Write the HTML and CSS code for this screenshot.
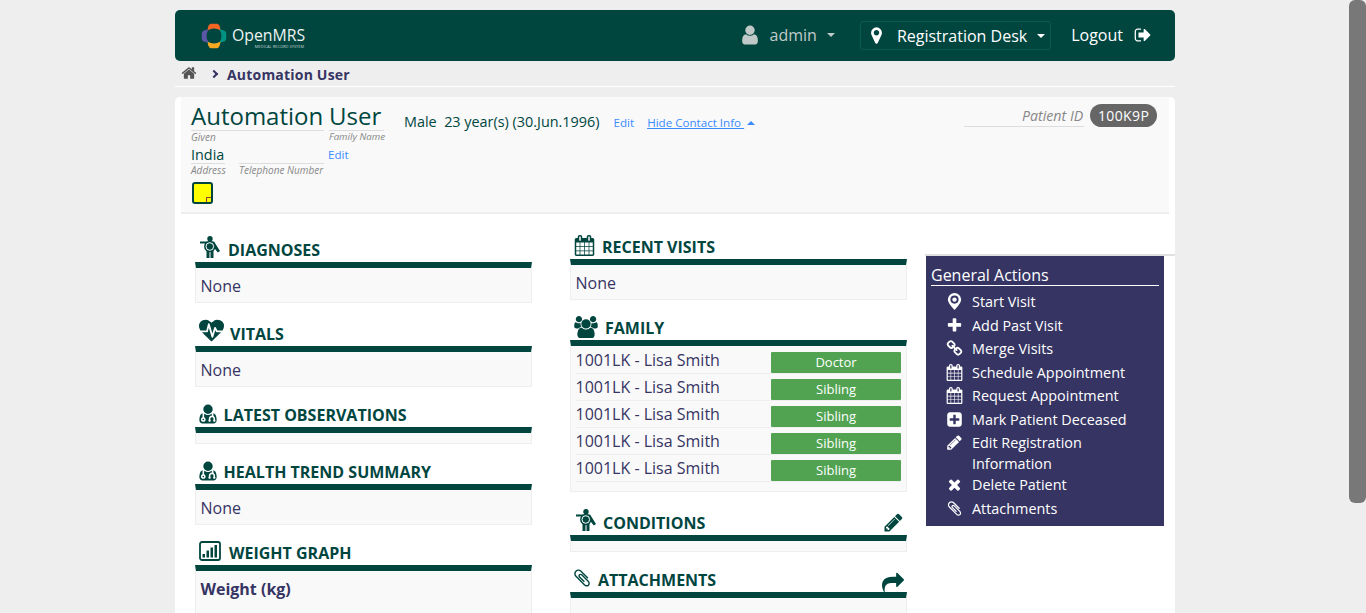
FILE: index.html
```html
<!DOCTYPE html>
<html lang="en">
<head>
  <meta charset="UTF-8">
  <title>OpenMRS - Automation User</title>
  <link rel="stylesheet" href="styles.css">
</head>
<body>
  <svg class="sprite" xmlns="http://www.w3.org/2000/svg">
    <symbol id="i-pencil" viewBox="0 0 1792 1792"><path d="M491 1536l91-91-235-235-91 91v107h128v128h107zm523-928q0-22-22-22-10 0-17 7l-542 542q-7 7-7 17 0 22 22 22 10 0 17-7l542-542q7-7 7-17zm-54-192l416 416-832 832h-416v-416zm683 96q0 53-37 90l-166 166-416-416 166-165q36-38 90-38 53 0 91 38l235 234q37 39 37 91z"/></symbol>
    <symbol id="i-plus" viewBox="0 0 1792 1792"><path d="M1600 736v192q0 40-28 68t-68 28h-416v416q0 40-28 68t-68 28h-192q-40 0-68-28t-28-68v-416h-416q-40 0-68-28t-28-68v-192q0-40 28-68t68-28h416v-416q0-40 28-68t68-28h192q40 0 68 28t28 68v416h416q40 0 68 28t28 68z"/></symbol>
    <symbol id="i-times" viewBox="0 0 1792 1792"><path d="M1490 1322q0 40-28 68l-136 136q-28 28-68 28t-68-28l-294-294-294 294q-28 28-68 28t-68-28l-136-136q-28-28-28-68t28-68l294-294-294-294q-28-28-28-68t28-68l136-136q28-28 68-28t68 28l294 294 294-294q28-28 68-28t68 28l136 136q28 28 28 68t-28 68l-294 294 294 294q28 28 28 68z"/></symbol>
    <symbol id="i-marker" viewBox="0 0 1792 1792"><path d="M1152 640q0-106-75-181t-181-75-181 75-75 181 75 181 181 75 181-75 75-181zm256 0q0 109-33 179l-364 774q-16 33-47.5 52t-67.5 19-67.5-19-46.5-52l-365-774q-33-70-33-179 0-212 150-362t362-150 362 150 150 362z"/></symbol>
    <symbol id="i-user" viewBox="0 0 1792 1792"><path d="M1536 1399q0 109-62.5 187t-150.5 78h-854q-88 0-150.5-78t-62.5-187q0-85 8.5-160.5t31.5-152 58.5-131 94-89 134.5-34.5q131 128 313 128t313-128q76 0 134.5 34.5t94 89 58.5 131 31.5 152 8.5 160.5zm-256-887q0 159-112.5 271.5t-271.5 112.5-271.5-112.5-112.5-271.5 112.5-271.5 271.5-112.5 271.5 112.5 112.5 271.5z"/></symbol>
    <symbol id="i-share" viewBox="0 0 1792 1792"><path d="M1792 640q0 26-19 45l-512 512q-19 19-45 19t-45-19-19-45v-256h-224q-98 0-175.500 6t-154 21.500-133 42.500-105.500 69.500-80 101-48.500 138.500-17.500 181q0 55 5 123 0 6 2.500 23.500t2.500 26.500q0 15-8.500 25t-23.500 10q-16 0-28-17-7-9-13-22t-13.500-30-10.500-24q-127-285-127-451 0-199 53-333 162-403 875-403h224v-256q0-26 19-45t45-19 45 19l512 512q19 19 19 45z"/></symbol>
    <symbol id="i-home" viewBox="0 0 1792 1792"><path d="M1472 992v480q0 26-19 45t-45 19h-384v-384h-256v384h-384q-26 0-45-19t-19-45v-480q0-1 .5-3t.5-3l575-474 575 474q1 2 1 6zm223-69l-62 74q-8 9-21 11h-3q-13 0-21-7l-692-577-692 577q-12 8-24 7-13-2-21-11l-62-74q-8-10-7-23.500t11-21.500l719-599q32-26 76-26t76 26l244 204v-195q0-14 9-23t23-9h192q14 0 23 9t9 23v408l219 182q10 8 11 21.500t-7 23.500z"/></symbol>
    <symbol id="i-calendar" viewBox="0 0 1792 1792"><path d="M192 1664h288v-288h-288v288zm352 0h320v-288h-320v288zm-352-352h288v-320h-288v320zm352 0h320v-320h-320v320zm-352-384h288v-288h-288v288zm736 736h320v-288h-320v288zm-384-736h320v-288h-320v288zm768 736h288v-288h-288v288zm-384-352h320v-320h-320v320zm-352-864v-288q0-13-9.500-22.500t-22.500-9.500h-64q-13 0-22.500 9.500t-9.500 22.500v288q0 13 9.500 22.500t22.500 9.500h64q13 0 22.500-9.500t9.500-22.500zm736 864h288v-320h-288v320zm-384-384h320v-288h-320v288zm384 0h288v-288h-288v288zm32-480v-288q0-13-9.500-22.500t-22.500-9.500h-64q-13 0-22.500 9.500t-9.500 22.500v288q0 13 9.500 22.500t22.500 9.500h64q13 0 22.500-9.500t9.500-22.500zm384-64v1280q0 52-38 90t-90 38h-1408q-52 0-90-38t-38-90v-1280q0-52 38-90t90-38h128v-96q0-66 47-113t113-47h64q66 0 113 47t47 113v96h384v-96q0-66 47-113t113-47h64q66 0 113 47t47 113v96h128q52 0 90 38t38 90z"/></symbol>
    <symbol id="i-users" viewBox="0 0 1920 1792"><path d="M593 896q-162 5-265 128h-134q-82 0-138-40.500t-56-118.500q0-353 124-353 6 0 43.500 21t97.500 42.500 119 21.500q67 0 133-23-5 37-5 66 0 139 81 256zm1071 637q0 120-73 189.500t-194 69.500h-874q-121 0-194-69.500t-73-189.500q0-53 3.500-103.500t14-109 26.500-108.500 43-97.500 62-81 85.500-53.500 111.500-20q10 0 43 21.500t73 48 107 48 135 21.500 135-21.500 107-48 73-48 43-21.500q61 0 111.500 20t85.500 53.500 62 81 43 97.500 26.500 108.500 14 109 3.500 103.500zm-1024-1277q0 106-75 181t-181 75-181-75-75-181 75-181 181-75 181 75 75 181zm704 384q0 159-112.500 271.500t-271.500 112.500-271.500-112.500-112.500-271.500 112.500-271.500 271.500-112.500 271.500 112.500 112.500 271.500zm576 225q0 78-56 118.500t-138 40.500h-134q-103-123-265-128 81-117 81-256 0-29-5-66 66 23 133 23 59 0 119-21.500t97.500-42.500 43.500-21q124 0 124 353zm-128-609q0 106-75 181t-181 75-181-75-75-181 75-181 181-75 181 75 75 181z"/></symbol>
    <symbol id="i-plus-square" viewBox="0 0 1792 1792"><path d="M1408 960v-128q0-26-19-45t-45-19h-320v-320q0-26-19-45t-45-19h-128q-26 0-45 19t-19 45v320h-320q-26 0-45 19t-19 45v128q0 26 19 45t45 19h320v320q0 26 19 45t45 19h128q26 0 45-19t19-45v-320h320q26 0 45-19t19-45zm256-544v960q0 119-84.500 203.500t-203.500 84.500h-960q-119 0-203.500-84.500t-84.500-203.500v-960q0-119 84.500-203.500t203.500-84.500h960q119 0 203.500 84.500t84.500 203.500z"/></symbol>
    <symbol id="i-clip" viewBox="0 0 1792 1792"><path d="M1596 1385q0 117-79 196t-196 79q-135 0-235-100l-777-776q-113-115-113-271 0-159 110-270t269-111q158 0 273 113l605 606q10 10 10 22 0 16-30.500 46.500t-46.500 30.500q-13 0-23-10l-606-607q-79-77-181-77-106 0-179 75t-73 181q0 105 76 181l776 777q63 63 145 63 64 0 106-42t42-106q0-82-63-145l-581-581q-26-24-60-24-29 0-48 19t-19 48q0 32 25 59l410 410q10 10 10 22 0 16-31 47t-47 31q-12 0-22-10l-410-410q-63-61-63-149 0-82 57-139t139-57q88 0 149 63l581 581q100 98 100 235z"/></symbol>
    <symbol id="i-signout" viewBox="0 0 1792 1792"><path d="M704 1440q0 4 1 20t.5 26.500-3 23.500-10 19.500-20.500 6.500h-320q-119 0-203.500-84.500t-84.500-203.500v-704q0-119 84.500-203.500t203.500-84.500h320q13 0 22.500 9.500t9.500 22.500q0 4 1 20t.5 26.500-3 23.500-10 19.500-20.500 6.500h-320q-66 0-113 47t-47 113v704q0 66 47 113t113 47h312l11.500 1 11.500 3 8 5.500 7 9 2 13.500zm928-544q0 26-19 45l-544 544q-19 19-45 19t-45-19-19-45v-288h-448q-26 0-45-19t-19-45v-384q0-26 19-45t45-19h448v-288q0-26 19-45t45-19 45 19l544 544q19 19 19 45z"/></symbol>
    <symbol id="i-link" viewBox="0 0 1792 1792"><path d="M1520 1216q0-40-28-68l-208-208q-28-28-68-28-42 0-72 32 3 3 19 18.500t21.500 21.500 15 19 13 25.500 3.500 27.500q0 40-28 68t-68 28q-15 0-27.500-3.500t-25.500-13-19-15-21.500-21.500-18.500-19q-33 31-33 73 0 40 28 68l206 207q27 27 68 27 40 0 68-26l147-146q28-28 28-67zm-703-705q0-40-28-68l-206-207q-28-28-68-28-39 0-68 27l-147 146q-28 28-28 67 0 40 28 68l208 208q27 27 68 27 42 0 72-31-3-3-19-18.500t-21.500-21.500-15-19-13-25.500-3.500-27.500q0-40 28-68t68-28q15 0 27.500 3.500t25.500 13 19 15 21.500 21.500 18.500 19q33-31 33-73zm895 705q0 120-85 203l-147 146q-83 83-203 83-121 0-204-85l-206-207q-83-83-83-203 0-123 88-209l-88-88q-86 88-208 88-120 0-204-84l-208-208q-84-84-84-204t85-203l147-146q83-83 203-83 121 0 204 85l206 207q83 83 83 203 0 123-88 209l88 88q86-88 208-88 120 0 204 84l208 208q84 84 84 204z"/></symbol>
    <symbol id="i-heartbeat" viewBox="0 0 1792 1792"><path d="M1280 1024h305q-5 6-10 10.500t-9 7.500l-3 4-623 600q-18 18-44 18t-44-18l-624-602q-5-2-21-20h369q22 0 39.500-13.500t22.500-34.500l70-281 190 667q6 20 23 33t39 13q21 0 38-13t23-33l146-485 56 112q18 35 57 35zm512-428q0 145-103 300h-369l-111-221q-8-17-25.500-27t-36.500-8q-45 5-56 46l-129 430-196-686q-6-20-23.500-33t-39.500-13-39 13.500-22 34.500l-116 464h-423q-103-155-103-300 0-220 127-344t351-124q62 0 126.500 21.500t120 58 95.500 68.500 76 68q36-36 76-68t95.500-68.500 120-58 126.500-21.500q224 0 351 124t127 344z"/></symbol>
    <symbol id="i-doctor" viewBox="0 0 1792 1792"><path d="M576 1344q0 26-19 45t-45 19-45-19-19-45 19-45 45-19 45 19 19 45zm1024 61q0 121-73 190t-194 69h-874q-121 0-194-69t-73-190q0-68 5.500-131t24-138 47.500-132.500 81-103 120-60.500q-22 52-22 120v203q-58 20-93 70t-35 111q0 80 56 136t136 56 136-56 56-136q0-61-35.500-111t-92.500-70v-203q0-62 25-93 132 104 295 104t295-104q25 31 25 93v64q-106 0-181 75t-75 181v89q-32 29-32 71 0 40 28 68t68 28 68-28 28-68q0-42-32-71v-89q0-52 38-90t90-38 90 38 38 90v89q-32 29-32 71 0 40 28 68t68 28 68-28 28-68q0-42-32-71v-89q0-68-34.500-127.500t-93.500-93.500q0-10 .5-42.500t0-48-2.500-41.500-7-47-13-40q68 15 120 60.500t81 103 47.500 132.500 24 138 5.500 131zm-320-893q0 159-112.500 271.500t-271.500 112.500-271.500-112.500-112.500-271.500 112.500-271.500 271.500-112.500 271.500 112.500 112.500 271.500z"/></symbol>
    <symbol id="i-graph" viewBox="0 0 22 20"><rect x="1" y="1" width="20" height="18" rx="2" fill="none" stroke="currentColor" stroke-width="1.8"/><rect x="3.500" y="13" width="2.500" height="3.500"/><rect x="7.500" y="9.500" width="2.500" height="7"/><rect x="11.500" y="6.500" width="2.500" height="10"/><rect x="15.500" y="4" width="2.500" height="12.500"/></symbol>
    <symbol id="i-body" viewBox="0 0 20 22"><circle cx="10" cy="2.800" r="2.700"/><path d="M0 5.500h14l6 9.500-2.200 1.500-4.300-5.500v11h-3V15h-1v7H6.500v-12L5 7.500H0z"/><circle cx="9.800" cy="10.500" r="5.700"/><circle cx="9.800" cy="10.500" r="3.800" fill="none" stroke="#fff" stroke-width="1"/></symbol>
    <symbol id="i-visit" viewBox="0 0 14 18"><path d="M7 0a7 7 0 0 1 7 7c0 3.500-4 8-7 11-3-3-7-7.500-7-11a7 7 0 0 1 7-7z"/><circle cx="7" cy="7" r="4.300" fill="#363463"/><circle cx="7" cy="7" r="2.300"/></symbol>
  </svg>

  <div class="page">
    <header class="topbar">
      <div class="logo">
        <svg class="logo-mark" viewBox="0 0 26 26">
          <path fill="#f26522" d="M6.500 7.500Q7 1 10 .8h6q3 .2 3.500 6.700Q13 3.500 6.500 7.500z"/>
          <path fill="#009384" d="M18.500 6.500Q25 7 25.200 10v6q-.2 3-6.700 3.500 4-6.500 0-13z"/>
          <path fill="#f7a823" d="M6.500 18.500Q7 25 10 25.200h6q3-.2 3.500-6.700-6.500 4-13 0z"/>
          <path fill="#5b57a6" d="M7.500 6.500Q1 7 .8 10v6q.2 3 6.700 3.500-4-6.500 0-13z"/>
        </svg>
        <div class="logo-text">
          <span class="logo-name">OpenMRS</span>
          <span class="logo-sub">MEDICAL RECORD SYSTEM</span>
        </div>
      </div>
      <nav class="topnav">
        <div class="nav-user">
          <svg class="nav-user-icon"><use href="#i-user"/></svg>
          <span>admin</span>
          <span class="caret"></span>
        </div>
        <div class="nav-location">
          <svg class="nav-pin"><use href="#i-marker"/></svg>
          <span>Registration Desk</span>
          <span class="caret"></span>
        </div>
        <div class="nav-logout">
          <span>Logout</span>
          <svg class="nav-logout-icon"><use href="#i-signout"/></svg>
        </div>
      </nav>
    </header>

    <div class="crumbs">
      <svg class="crumb-home"><use href="#i-home"/></svg>
      <span class="crumb-sep"></span>
      <span class="crumb-name">Automation User</span>
    </div>

    <main class="card">
      <section class="patient">
        <div class="patient-left">
          <div class="name-row">
            <div class="field field-given">
              <span class="field-value name">Automation</span>
              <span class="field-label">Given</span>
            </div>
            <div class="field field-family">
              <span class="field-value name">User</span>
              <span class="field-label">Family Name</span>
            </div>
          </div>
          <div class="address-row">
            <div class="field field-address">
              <span class="field-value">India</span>
              <span class="field-label">Address</span>
            </div>
            <div class="field field-phone">
              <span class="field-value">&nbsp;</span>
              <span class="field-label">Telephone Number</span>
            </div>
            <a class="link edit-contact" href="#">Edit</a>
          </div>
          <div class="sticky"><span class="sticky-fold"></span></div>
        </div>
        <div class="patient-info">
          <span class="demographics">Male&nbsp; 23 year(s) (30.Jun.1996)</span>
          <a class="link" href="#">Edit</a>
          <a class="link link-contact" href="#"><u>Hide Contact Info </u><span class="caret-up"></span></a>
        </div>
        <div class="patient-id">
          <span class="patient-id-label">Patient ID</span>
          <span class="badge-id">100K9P</span>
        </div>
      </section>

      <div class="columns">
        <div class="col">
          <section class="box">
            <h3 class="box-head tall"><svg class="ic ic-body"><use href="#i-body"/></svg>DIAGNOSES</h3>
            <div class="box-body">None</div>
          </section>
          <section class="box">
            <h3 class="box-head tall"><svg class="ic ic-heart"><use href="#i-heartbeat"/></svg>VITALS</h3>
            <div class="box-body">None</div>
          </section>
          <section class="box">
            <h3 class="box-head"><svg class="ic ic-doctor"><use href="#i-doctor"/></svg>LATEST OBSERVATIONS</h3>
            <div class="box-body empty"></div>
          </section>
          <section class="box">
            <h3 class="box-head"><svg class="ic ic-doctor"><use href="#i-doctor"/></svg>HEALTH TREND SUMMARY</h3>
            <div class="box-body">None</div>
          </section>
          <section class="box">
            <h3 class="box-head"><svg class="ic ic-graph"><use href="#i-graph"/></svg>WEIGHT GRAPH</h3>
            <div class="box-body graph-body"><strong>Weight (kg)</strong></div>
          </section>
        </div>

        <div class="col col-mid">
          <section class="box">
            <h3 class="box-head"><svg class="ic ic-cal"><use href="#i-calendar"/></svg>RECENT VISITS</h3>
            <div class="box-body">None</div>
          </section>
          <section class="box">
            <h3 class="box-head"><svg class="ic ic-users"><use href="#i-users"/></svg>FAMILY</h3>
            <div class="box-body family">
              <div class="family-row"><span>1001LK - Lisa Smith</span><span class="relation">Doctor</span></div>
              <div class="family-row"><span>1001LK - Lisa Smith</span><span class="relation">Sibling</span></div>
              <div class="family-row"><span>1001LK - Lisa Smith</span><span class="relation">Sibling</span></div>
              <div class="family-row"><span>1001LK - Lisa Smith</span><span class="relation">Sibling</span></div>
              <div class="family-row"><span>1001LK - Lisa Smith</span><span class="relation">Sibling</span></div>
            </div>
          </section>
          <section class="box">
            <h3 class="box-head tall"><svg class="ic ic-body"><use href="#i-body"/></svg>CONDITIONS<svg class="head-action ic-edit"><use href="#i-pencil"/></svg></h3>
            <div class="box-body empty"></div>
          </section>
          <section class="box">
            <h3 class="box-head"><svg class="ic ic-clip"><use href="#i-clip"/></svg>ATTACHMENTS<svg class="head-action ic-share"><use href="#i-share"/></svg></h3>
            <div class="box-body graph-body"></div>
          </section>
        </div>

        <aside class="side">
          <div class="actions">
            <h4 class="actions-title">General Actions</h4>
            <ul class="actions-list">
              <li><svg class="act-ic"><use href="#i-visit"/></svg><span>Start Visit</span></li>
              <li><svg class="act-ic"><use href="#i-plus"/></svg><span>Add Past Visit</span></li>
              <li><svg class="act-ic"><use href="#i-link"/></svg><span>Merge Visits</span></li>
              <li><svg class="act-ic"><use href="#i-calendar"/></svg><span>Schedule Appointment</span></li>
              <li><svg class="act-ic"><use href="#i-calendar"/></svg><span>Request Appointment</span></li>
              <li><svg class="act-ic"><use href="#i-plus-square"/></svg><span>Mark Patient Deceased</span></li>
              <li><svg class="act-ic"><use href="#i-pencil"/></svg><span>Edit Registration<br>Information</span></li>
              <li><svg class="act-ic"><use href="#i-times"/></svg><span>Delete Patient</span></li>
              <li><svg class="act-ic"><use href="#i-clip"/></svg><span>Attachments</span></li>
            </ul>
          </div>
        </aside>
      </div>
    </main>
  </div>
  <div class="scroll-thumb"></div>
</body>
</html>
```

FILE: styles.css
```css
* { box-sizing: border-box; }
html, body { height: 100%; margin: 0; }
body {
  display: flex;
  overflow: hidden;
  background: #eeeeee;
  color: #363463;
  font-family: "Open Sans", sans-serif;
  font-size: 14px;
}
a { text-decoration: none; }
svg { fill: currentColor; }
.sprite { display: none; }

.page {
  flex: 1;
  min-width: 0;
  height: 613px;
  padding: 10px 0 0 175px;
  overflow: hidden;
}
.scroll-thumb {
  flex: none;
  width: 17px;
  height: 503px;
  background: #787878;
  border-radius: 6px;
}

/* top bar */
.topbar {
  display: flex;
  align-items: center;
  justify-content: space-between;
  width: 1000px;
  height: 51px;
  padding: 0 23px 0 26px;
  background: #00463f;
  border-radius: 5px;
  color: #fff;
}
.logo { display: flex; align-items: center; gap: 5px; }
.logo-mark { width: 26px; height: 26px; }
.logo-text { display: flex; flex-direction: column; align-items: flex-end; margin-top: 5px; line-height: 1; }
.logo-name { height: 17px; font-size: 15.8px; line-height: 17px; overflow: visible; color: #eef3f2; }
.logo-sub { height: 5px; margin-right: 1px; font-size: 4px; line-height: 5px; color: #c5d3d1; }

.topnav { display: flex; align-items: center; font-size: 16px; }
.caret {
  display: inline-block;
  width: 0;
  height: 0;
  margin-left: 10px;
  border: 4px solid transparent;
  border-top-color: currentColor;
  border-bottom-width: 0;
}
.nav-user { display: flex; align-items: center; color: #c0c9c8; margin-bottom: 2px; }
.nav-user-icon { width: 22px; height: 22px; margin-right: 9px; }
.nav-location {
  display: flex;
  align-items: center;
  height: 29px;
  margin-left: 25px;
  padding: 0 5px 0 6px;
  border: 1px solid #0a5a52;
  border-radius: 3px;
}
.nav-pin { width: 19px; height: 19px; margin-right: 11px; }
.nav-logout { display: flex; align-items: center; margin-left: 20px; margin-bottom: 2px; }
.nav-logout-icon { width: 18px; height: 18px; margin-left: 11px; }

/* breadcrumb */
.crumbs {
  display: flex;
  align-items: center;
  width: 1000px;
  height: 26px;
  padding: 1px 0 0 6px;
  border-bottom: 1px solid #fff;
  color: #363463;
}
.crumb-home { width: 16px; height: 16px; margin-bottom: 2px; color: #555; }
.crumb-sep {
  width: 6px;
  height: 6px;
  margin-left: 14px;
  border-top: 2px solid #363463;
  border-right: 2px solid #363463;
  transform: rotate(45deg);
}
.crumb-name { margin-left: 10px; font-weight: 700; letter-spacing: .2px; }

/* patient header */
.card {
  width: 1000px;
  min-height: 600px;
  margin-top: 10px;
  background: #fff;
  border-radius: 5px 5px 0 0;
}
.patient {
  display: flex;
  height: 117px;
  margin: 0 6px;
  padding: 5px 12px 0 10px;
  background: #f9f9f9;
  border-bottom: 2px solid #eeeeee;
}
.patient-left { width: 213px; }
.name-row, .address-row { display: flex; }
.field { display: flex; flex-direction: column; }
.field-value { display: block; border-bottom: 1px solid #ddd; }
.field-value.name { height: 29px; font-size: 24px; line-height: 28px; color: #00463f; }
.field-label { font-size: 10px; line-height: 12px; font-style: italic; color: #888; white-space: nowrap; }
.field-family .field-label { font-size: 9.7px; }
.field-given { width: 133px; }
.field-family { width: 55px; margin-left: 5px; }
.address-row { align-items: flex-start; }
.address-row .field-value { height: 21px; padding-top: 3px; font-size: 14.4px; line-height: 17px; color: #00463f; }
.field-address { width: 34px; }
.field-phone { width: 85px; margin-left: 14px; }
.edit-contact { margin: 4px 0 0 4px; }
.link { font-size: 11.6px; color: #3a8bff; }
.sticky {
  position: relative;
  width: 21px;
  height: 22px;
  margin: 6px 0 0 1px;
  background: #ffff00;
  border: 2px solid #00463f;
  border-radius: 3px;
}
.sticky-fold {
  position: absolute;
  right: 0;
  bottom: 0;
  width: 5px;
  height: 5px;
  border-top: 1px solid #a33a2d;
  border-left: 1px solid #a33a2d;
}
.patient-info { display: flex; align-items: baseline; height: 24px; margin-top: 10px; }
.demographics { color: #00463f; font-size: 14.4px; }
.patient-info .link { margin-left: 14px; }
.patient-info .link-contact { margin-left: 13px; }
.caret-up {
  display: inline-block;
  width: 0;
  height: 0;
  margin-left: 3px;
  vertical-align: 2px;
  border: 4.5px solid transparent;
  border-bottom-color: #3a8bff;
  border-top-width: 0;
}
.patient-id { display: flex; align-items: flex-start; margin: 1px 0 0 auto; }
.patient-id-label {
  width: 120px;
  height: 24px;
  padding: 2px 1px 0 0;
  border-bottom: 1px solid #ddd;
  font-size: 14.2px;
  font-style: italic;
  text-align: right;
  color: #888;
  line-height: 21px;
}
.badge-id {
  height: 23px;
  margin: 1px 0 0 6px;
  padding: 0 7.7px;
  background: #666;
  border-radius: 12px;
  color: #fff;
  line-height: 23px;
  letter-spacing: .4px;
}

/* columns */
.columns { display: flex; align-items: flex-start; padding: 5px 0 0 20px; }
.col { width: 337px; }
.col-mid { margin-left: 38px; }
.box { margin-top: 16px; }
.box-head {
  display: flex;
  align-items: flex-end;
  height: 24px;
  margin: 0;
  color: #00463f;
  font-size: 16px;
  font-weight: 700;
  line-height: 24px;
  white-space: nowrap;
}
.box-head.tall { height: 27px; }
.box-body {
  box-sizing: content-box;
  min-height: 32px;
  padding: 2px 5px 0 4.5px;
  background: #f9f9f9;
  border: 1px solid #eeeeee;
  border-top: 6px solid #00463f;
  font-size: 16px;
  line-height: 32px;
}
.box-body.empty { height: 10px; min-height: 10px; padding-top: 0; }
.graph-body { height: 80px; }
.family { min-height: 0; padding: 1px 5px 9px 4.5px; }
.family-row {
  display: flex;
  align-items: flex-start;
  justify-content: space-between;
  height: 27px;
  border-bottom: 1px solid #eeeeee;
  line-height: 27px;
}
.relation {
  width: 130px;
  height: 21px;
  margin-top: 5px;
  background: #51a351;
  border-radius: 1px;
  color: #fff;
  font-size: 13px;
  line-height: 21px;
  text-align: center;
}

/* heading icons */
.ic { flex: none; }
.ic-body { width: 20px; height: 22px; margin: 0 8px 4px 5px; }
.col-mid .ic-body { margin: 0 7px 4px 6px; }
.ic-heart { width: 25px; height: 25px; margin: 0 6px 3px 4px; }
.ic-doctor { width: 22px; height: 22px; margin: 0 5px 2.4px 1.6px; }
.ic-graph { width: 22px; height: 20px; margin: 0 8px 4px 4px; }
.ic-cal { width: 21px; height: 21px; margin: 0 7px 3px 4px; }
.ic-users { width: 24px; height: 22px; margin: 0 7px 2px 4px; }
.ic-clip { width: 20px; height: 20px; margin: 0 6px 4px 2px; }
.head-action { flex: none; margin-left: auto; }
.ic-edit { width: 21px; height: 21px; margin-right: 3px; margin-bottom: 2px; }
.ic-share { width: 22px; height: 22px; margin-right: 3px; margin-bottom: -2px; }

/* general actions */
.side { width: 250px; margin: 35px 0 0 18px; border-top: 2px solid #e0e0e0; }
.actions {
  width: 238px;
  height: 270px;
  margin-left: 1px;
  padding: 9px 5px 0;
  background: #363463;
  color: #fff;
}
.actions-title {
  margin: 0;
  border-bottom: 1px solid #fff;
  font-size: 16px;
  font-weight: 400;
  line-height: 20px;
}
.actions-list { margin: 5px 0 0; padding: 0; list-style: none; font-size: 14.4px; }
.actions-list li {
  display: flex;
  min-height: 23.5px;
  padding-left: 15px;
  line-height: 21px;
}
.act-ic { flex: none; width: 17px; height: 17px; margin: 2px 9px 0 0; }
```
